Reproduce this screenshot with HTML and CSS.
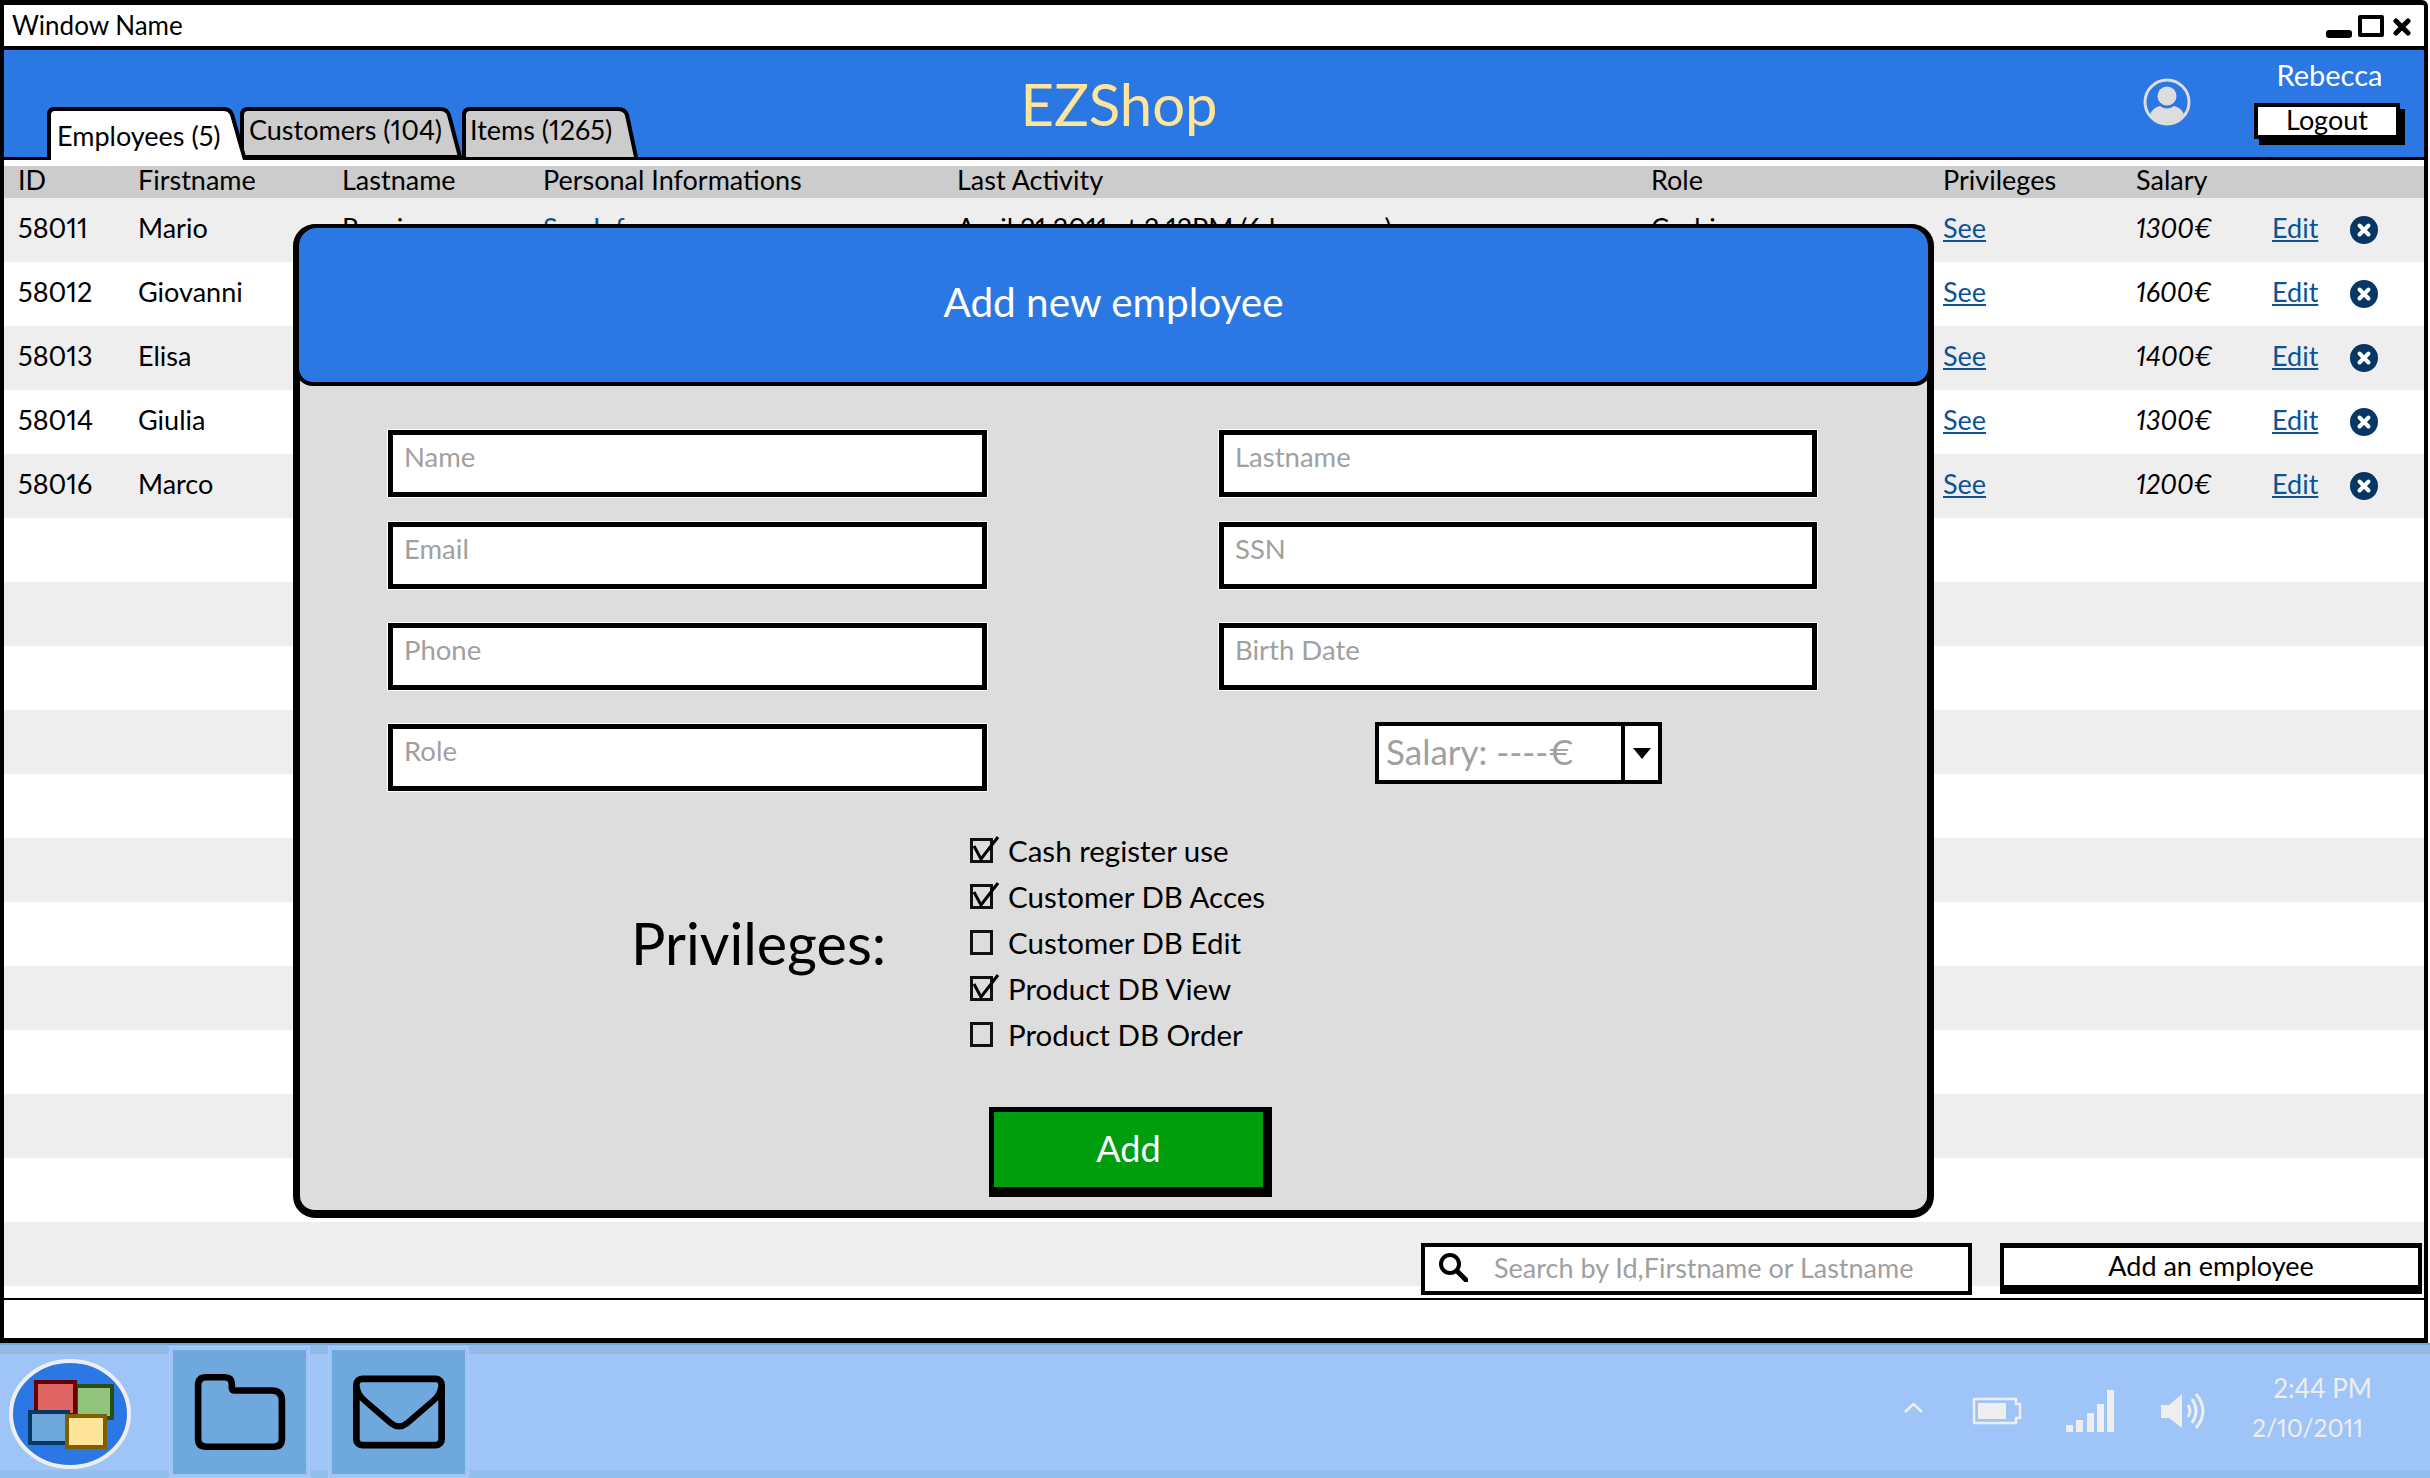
FILE: index.html
```html
<!doctype html>
<html>
<head>
  <meta charset="utf-8">
  <title>EZShop</title>
  <link rel="stylesheet" href="styles.css">
</head>
<body>
<div class="window">
  <div class="titlebar">
    <span class="window_name">Window Name</span>
    <div class="window_ctrl">
      <span class="ctrl_min"></span>
      <span class="ctrl_max"></span>
      <svg class="ctrl_close" viewBox="0 0 18 18"><path d="M3 3 L15 15 M15 3 L3 15" stroke="#000" stroke-width="5" stroke-linecap="round"/></svg>
    </div>
  </div>

  <div class="header">
    <div class="tabs">
      <div class="tab tab_active">
        <svg viewBox="0 0 200 56" preserveAspectRatio="none"><path d="M2 56 V8 Q2 2 8 2 H176 Q183 2 185 8 L198 56" fill="#fff" stroke="#000" stroke-width="4" vector-effect="non-scaling-stroke"/></svg>
        <span>Employees (5)</span>
      </div>
      <div class="tab tab_cust">
        <svg viewBox="0 0 222 50" preserveAspectRatio="none"><path d="M2 50 V8 Q2 2 8 2 H200 Q207 2 209 8 L220 50 Z" fill="#ccc" stroke="#000" stroke-width="4" vector-effect="non-scaling-stroke"/></svg>
        <span>Customers (104)</span>
      </div>
      <div class="tab tab_items">
        <svg viewBox="0 0 176 50" preserveAspectRatio="none"><path d="M2 50 V8 Q2 2 8 2 H156 Q163 2 165 8 L174 50" fill="#ccc" stroke="#000" stroke-width="4" vector-effect="non-scaling-stroke"/></svg>
        <span>Items (1265)</span>
      </div>
    </div>
    <div class="brand">EZShop</div>
    <div></div>
    <svg class="avatar" viewBox="0 0 48 48">
      <circle cx="24" cy="24" r="22" fill="none" stroke="#ddd" stroke-width="3"/>
      <circle cx="24" cy="18" r="9.5" fill="#ddd"/>
      <path d="M7 37 Q9 30 17 28 Q24 33 31 28 Q39 30 41 37 Q34 45 24 45 Q14 45 7 37 Z" fill="#ddd"/>
    </svg>
    <div></div>
    <div class="user">
      <div class="user_name">Rebecca</div>
      <div class="logout">Logout</div>
    </div>
  </div>

  <div class="grid">
    <div class="row row_head">
      <div>ID</div><div>Firstname</div><div>Lastname</div><div>Personal Informations</div>
      <div>Last Activity</div><div>Role</div><div>Privileges</div><div>Salary</div><div></div><div></div>
    </div>
    <div class="row">
      <div>58011</div><div>Mario</div><div>Rossi</div><div><a href="#">See Info</a></div>
      <div>April 21 2011 at 2:12PM (6 hours ago)</div><div>Cashier</div>
      <div><a href="#">See</a></div><div class="salary">1300€</div><div><a href="#">Edit</a></div>
      <div><svg class="del" viewBox="0 0 28 28"><circle cx="14" cy="14" r="14" fill="#073763"/><path d="M9.5 9.5 L18.5 18.5 M18.5 9.5 L9.5 18.5" stroke="#fff" stroke-width="4" stroke-linecap="round"/></svg></div>
    </div>
    <div class="row">
      <div>58012</div><div>Giovanni</div><div></div><div></div><div></div><div></div>
      <div><a href="#">See</a></div><div class="salary">1600€</div><div><a href="#">Edit</a></div>
      <div><svg class="del" viewBox="0 0 28 28"><circle cx="14" cy="14" r="14" fill="#073763"/><path d="M9.5 9.5 L18.5 18.5 M18.5 9.5 L9.5 18.5" stroke="#fff" stroke-width="4" stroke-linecap="round"/></svg></div>
    </div>
    <div class="row">
      <div>58013</div><div>Elisa</div><div></div><div></div><div></div><div></div>
      <div><a href="#">See</a></div><div class="salary">1400€</div><div><a href="#">Edit</a></div>
      <div><svg class="del" viewBox="0 0 28 28"><circle cx="14" cy="14" r="14" fill="#073763"/><path d="M9.5 9.5 L18.5 18.5 M18.5 9.5 L9.5 18.5" stroke="#fff" stroke-width="4" stroke-linecap="round"/></svg></div>
    </div>
    <div class="row">
      <div>58014</div><div>Giulia</div><div></div><div></div><div></div><div></div>
      <div><a href="#">See</a></div><div class="salary">1300€</div><div><a href="#">Edit</a></div>
      <div><svg class="del" viewBox="0 0 28 28"><circle cx="14" cy="14" r="14" fill="#073763"/><path d="M9.5 9.5 L18.5 18.5 M18.5 9.5 L9.5 18.5" stroke="#fff" stroke-width="4" stroke-linecap="round"/></svg></div>
    </div>
    <div class="row">
      <div>58016</div><div>Marco</div><div></div><div></div><div></div><div></div>
      <div><a href="#">See</a></div><div class="salary">1200€</div><div><a href="#">Edit</a></div>
      <div><svg class="del" viewBox="0 0 28 28"><circle cx="14" cy="14" r="14" fill="#073763"/><path d="M9.5 9.5 L18.5 18.5 M18.5 9.5 L9.5 18.5" stroke="#fff" stroke-width="4" stroke-linecap="round"/></svg></div>
    </div>
    <div class="row"></div><div class="row"></div><div class="row"></div><div class="row"></div>
    <div class="row"></div><div class="row"></div><div class="row"></div><div class="row"></div>
    <div class="row"></div><div class="row"></div><div class="row"></div><div class="row"></div>

    <div class="toolbar">
      <div class="search">
        <svg viewBox="0 0 30 30"><circle cx="12" cy="12" r="9" fill="none" stroke="#000" stroke-width="4"/><path d="M19 19 L28 28" stroke="#000" stroke-width="5" stroke-linecap="round"/></svg>
        <span>Search by Id,Firstname or Lastname</span>
      </div>
      <div class="add_employee">Add an employee</div>
    </div>
  </div>

  <div class="statusbar"></div>

  <div class="modal">
    <div class="modal_head">Add new employee</div>
    <div class="form">
      <div class="field">Name</div>
      <div class="field">Lastname</div>
      <div class="field">Email</div>
      <div class="field">SSN</div>
      <div class="field">Phone</div>
      <div class="field">Birth Date</div>
      <div class="field">Role</div>
      <div class="select">
        <span class="select_text">Salary: ----€</span>
        <span class="select_btn"><i></i></span>
      </div>
    </div>
    <div class="privileges">
      <div class="priv_title">Privileges:</div>
      <div class="checks">
        <div class="check">
          <svg viewBox="0 0 30 30"><rect x="1.5" y="4.5" width="20" height="22" fill="none" stroke="#111" stroke-width="3"/><path d="M4 11 L11 24 L28 2" fill="none" stroke="#000" stroke-width="3"/></svg>
          <span>Cash register use</span>
        </div>
        <div class="check">
          <svg viewBox="0 0 30 30"><rect x="1.5" y="4.5" width="20" height="22" fill="none" stroke="#111" stroke-width="3"/><path d="M4 11 L11 24 L28 2" fill="none" stroke="#000" stroke-width="3"/></svg>
          <span>Customer DB Acces</span>
        </div>
        <div class="check">
          <svg viewBox="0 0 30 30"><rect x="1.5" y="4.5" width="20" height="22" fill="none" stroke="#111" stroke-width="3"/></svg>
          <span>Customer DB Edit</span>
        </div>
        <div class="check">
          <svg viewBox="0 0 30 30"><rect x="1.5" y="4.5" width="20" height="22" fill="none" stroke="#111" stroke-width="3"/><path d="M4 11 L11 24 L28 2" fill="none" stroke="#000" stroke-width="3"/></svg>
          <span>Product DB View</span>
        </div>
        <div class="check">
          <svg viewBox="0 0 30 30"><rect x="1.5" y="4.5" width="20" height="22" fill="none" stroke="#111" stroke-width="3"/></svg>
          <span>Product DB Order</span>
        </div>
      </div>
    </div>
    <div class="add_btn">Add</div>
  </div>
</div>

<div class="taskbar">
  <div class="start">
    <svg viewBox="0 0 122 110">
      <ellipse cx="61" cy="55" rx="59" ry="53" fill="#2b78e4" stroke="#eee" stroke-width="4"/>
      <rect x="67" y="27" width="36" height="32" fill="#93c47d" stroke="#274e13" stroke-width="4"/>
      <rect x="27" y="23" width="39" height="33" fill="#e06666" stroke="#660000" stroke-width="4"/>
      <rect x="21" y="53" width="38" height="31" fill="#6fa8dc" stroke="#073763" stroke-width="4"/>
      <rect x="58" y="57" width="38" height="31" fill="#ffe599" stroke="#7f6000" stroke-width="4"/>
    </svg>
  </div>
  <div class="app app_first">
    <svg viewBox="0 0 90 76"><path d="M4 12 Q4 4 12 4 H30 Q37 4 37 11 V14 Q37 17 40 17 H76 Q86 17 86 27 V64 Q86 72 78 72 H12 Q4 72 4 64 Z" fill="none" stroke="#000" stroke-width="6.5"/></svg>
  </div>
  <div class="app">
    <svg viewBox="0 0 96 76"><rect x="3.5" y="3.5" width="89" height="69" rx="6" fill="none" stroke="#000" stroke-width="7"/><path d="M4 12 Q5 20 12 26 L40 50 Q48 56 56 50 L84 26 Q91 20 92 12" fill="none" stroke="#000" stroke-width="6.5"/></svg>
  </div>
  <div class="tray">
    <svg class="tray_up" viewBox="0 0 19 10"><path d="M1 9 L9.5 1 L18 9" fill="none" stroke="#eee" stroke-width="2.5"/></svg>
    <svg class="tray_batt" viewBox="0 0 50 28"><path d="M2 2 H44 V7 H48 V21 H44 V26 H2 Z" fill="none" stroke="#eee" stroke-width="2.5" stroke-linejoin="round"/><rect x="6" y="6" width="28" height="16" fill="#eee"/></svg>
    <svg class="tray_sig" viewBox="0 0 48 42"><rect x="0" y="35" width="7" height="7" fill="#eee"/><rect x="10" y="30" width="7" height="12" fill="#eee"/><rect x="21" y="23" width="7" height="19" fill="#eee"/><rect x="31" y="14" width="7" height="28" fill="#eee"/><rect x="41" y="0" width="7" height="42" fill="#eee"/></svg>
    <svg class="tray_vol" viewBox="0 0 46 38"><path d="M0 13 H8 L21 2 V36 L8 26 H0 Z" fill="#eee"/><path d="M27 13 Q31 19 27 25 M31 7 Q39 19 31 31 M35 2 Q49 19 35 36" fill="none" stroke="#eee" stroke-width="3"/></svg>
    <div class="clock">
      <div class="clock_time">2:44 PM</div>
      <div class="clock_date">2/10/2011</div>
    </div>
  </div>
</div>
</body>
</html>
```

FILE: styles.css
```css
* { box-sizing: border-box; }

html, body {
  margin: 0;
  width: 2430px;
  height: 1478px;
  overflow: hidden;
  background: #fff;
  font-family: 'Lato', 'Open Sans', sans-serif;
  font-size: 27px;
  font-variant-numeric: proportional-nums;
  color: #000;
}

a { color: #0b5394; }

.window {
  position: relative;
  width: 2428px;
  height: 1343px;
  border: solid #000;
  border-width: 5px 4px 5px 4px;
  border-top-right-radius: 6px;
  display: flex;
  flex-direction: column;
}

/* title bar */
.titlebar {
  height: 45px;
  border-bottom: 4px solid #000;
  display: flex;
  align-items: center;
  justify-content: space-between;
  padding: 0 13px 2px 8px;
  font-size: 26px;
}

.window_ctrl {
  display: flex;
  align-items: flex-end;
  gap: 6px;
  padding-top: 6px;
}

.ctrl_min {
  width: 26px;
  height: 8px;
  margin-bottom: 2px;
  background: #000;
  border-radius: 3px;
}

.ctrl_max {
  width: 26px;
  height: 22px;
  margin-bottom: 3px;
  border: 4px solid #000;
  border-radius: 2px;
}

.ctrl_close {
  width: 18px;
  height: 18px;
  margin: 0 0 4px 3px;
}

/* blue header */
.header {
  height: 110px;
  background: #2b78e4;
  border-bottom: 3px solid #000;
  display: grid;
  grid-template-columns: 634px 962px 1fr 48px 63px 151px;
  align-items: start;
  padding-right: 19px;
}

.tabs {
  display: flex;
  align-items: flex-end;
  height: 110px;
  padding-left: 43px;
}

.tab {
  position: relative;
  height: 50px;
  flex: none;
  line-height: 44px;
}

.tab svg {
  position: absolute;
  left: 0;
  top: 0;
  width: 100%;
  height: 100%;
}

.tab span { position: relative; }

.tab_active {
  width: 200px;
  height: 53px;
  line-height: 58px;
  padding-left: 10px;
  z-index: 2;
  margin-right: -7px;
}

.tab_cust { width: 222px; padding-left: 9px; margin-bottom: 3px; z-index: 1; line-height: 45px; }
.tab_items { width: 176px; padding-left: 8px; margin-bottom: 3px; line-height: 45px; }

.brand {
  text-align: center;
  font-size: 58px;
  line-height: 70px;
  padding-top: 19px;
  color: #ffe599;
}

.avatar {
  width: 48px;
  height: 48px;
  margin-top: 28px;
}

.user { width: 151px; }

.user_name {
  color: #fff;
  font-size: 29px;
  text-align: center;
  line-height: 32px;
  padding: 9px 0 0 0;
}

.logout {
  margin-top: 12px;
  width: 146px;
  height: 36px;
  background: #fff;
  border: 4px solid #000;
  box-shadow: 5px 6px 0 #000;
  text-align: center;
  line-height: 26px;
}

/* table */
.grid {
  position: relative;
  flex: 1;
  padding-top: 6px;
}

.row {
  height: 64px;
  display: grid;
  grid-template-columns: 120px 204px 201px 414px 694px 292px 193px 136px 90px 76px;
  line-height: 36px;
  padding-top: 12px;
}

.row > div { padding-left: 14px; white-space: nowrap; }
.row:nth-child(even) { background: #eee; }

.row_head {
  height: 32px;
  padding-top: 0;
  line-height: 28px;
  background: #ccc;
}

.salary { font-style: italic; }

.del {
  width: 28px;
  height: 28px;
  margin: 6px 0 0 -12px;
  display: block;
}

.toolbar {
  position: absolute;
  left: 1417px;
  top: 1083px;
  display: flex;
  align-items: flex-start;
  gap: 28px;
}

.search {
  width: 551px;
  height: 52px;
  background: #fff;
  border: 4px solid #000;
  display: flex;
  align-items: center;
  color: #a0a0a0;
  padding: 0 0 4px 13px;
}

.search svg {
  width: 30px;
  height: 30px;
  margin-right: 26px;
}

.add_employee {
  width: 422px;
  height: 51px;
  background: #fff;
  border: solid #000;
  border-width: 5px 4px 9px 4px;
  text-align: center;
  line-height: 36px;
}

.statusbar {
  height: 40px;
  border-top: 2px solid #000;
}

/* add employee dialog */
.modal {
  position: absolute;
  left: 289px;
  top: 219px;
  width: 1641px;
  height: 994px;
  background: #ddd;
  border: solid #000;
  border-width: 4px 7px 8px 7px;
  border-radius: 22px;
}

.modal_head {
  height: 162px;
  margin: -4px -5px 0 -5px;
  background: #2b78e4;
  border: 4px solid #000;
  border-radius: 22px 22px 18px 18px;
  color: #fff;
  font-size: 40.5px;
  text-align: center;
  line-height: 148px;
}

.form {
  display: grid;
  grid-template-columns: 599px 598px;
  grid-template-rows: 92px 101px 101px 67px;
  column-gap: 232px;
  padding: 44px 0 0 88px;
}

.field {
  height: 67px;
  background: #fff;
  border: 5px solid #000;
  box-shadow: 0 0 0 1px #fff;
  color: #a0a0a0;
  padding: 0 11px;
  line-height: 43px;
  font-size: 27.5px;
}

.select {
  width: 287px;
  height: 62px;
  margin: -2px 0 0 156px;
  background: #fff;
  border: 4px solid #000;
  display: flex;
  color: #a0a0a0;
  font-size: 35px;
  line-height: 50px;
}

.select_text { flex: 1; padding-left: 7px; }

.select_btn {
  width: 37px;
  border-left: 4px solid #000;
  display: flex;
  align-items: center;
  justify-content: center;
}

.select_btn i {
  border: 9px solid transparent;
  border-top: 11px solid #000;
  border-bottom: 0;
}

.privileges {
  height: 230px;
  display: flex;
  align-items: center;
  margin: 36px 0 0 88px;
}

.priv_title {
  width: 582px;
  padding-left: 243px;
  font-size: 57.5px;
}

.check {
  height: 46px;
  display: flex;
  align-items: center;
  gap: 8px;
  font-size: 29.5px;
}

.check svg { width: 30px; height: 30px; }

.add_btn {
  width: 283px;
  height: 90px;
  margin: 50px 0 0 689px;
  background: #009e0f;
  border: solid #000;
  border-width: 5px 9px 10px 5px;
  color: #fff;
  font-size: 36px;
  text-align: center;
  line-height: 72px;
}

/* taskbar */
.taskbar {
  height: 135px;
  background: linear-gradient(#6fa8dc 0, #6fa8dc 2px, #93bbe6 2px, #93bbe6 11px, #9fc5f8 11px, #9fc5f8 127px, #93bfef 127px);
  display: flex;
  align-items: flex-start;
}

.start { width: 122px; height: 110px; margin: 16px 0 0 9px; }
.start svg { width: 122px; height: 110px; display: block; }

.app {
  width: 139px;
  height: 130px;
  margin: 4px 0 0 20px;
  background: #6fa8dc;
  border: 3px solid #9fc5f8;
  box-shadow: 0 0 0 1px #a9ccf8;
  display: flex;
  align-items: center;
  justify-content: center;
}

.app_first { margin-left: 39px; }
.app svg { width: 92px; height: 78px; }

.tray {
  margin: 0 0 0 auto;
  height: 135px;
  display: flex;
  align-items: center;
  padding-right: 58px;
}

.tray_up { width: 19px; height: 10px; margin-right: 49px; margin-top: -6px; }
.tray_batt { width: 50px; height: 28px; margin-right: 44px; }
.tray_sig { width: 48px; height: 42px; margin-right: 47px; }
.tray_vol { width: 46px; height: 38px; margin-right: 46px; }

.clock {
  color: #eee;
  width: 119px;
  font-size: 26px;
  margin-top: -6px;
}

.clock_time { text-align: right; line-height: 40px; }
.clock_date { line-height: 40px; font-size: 24.5px; margin-left: -1px; }
```
